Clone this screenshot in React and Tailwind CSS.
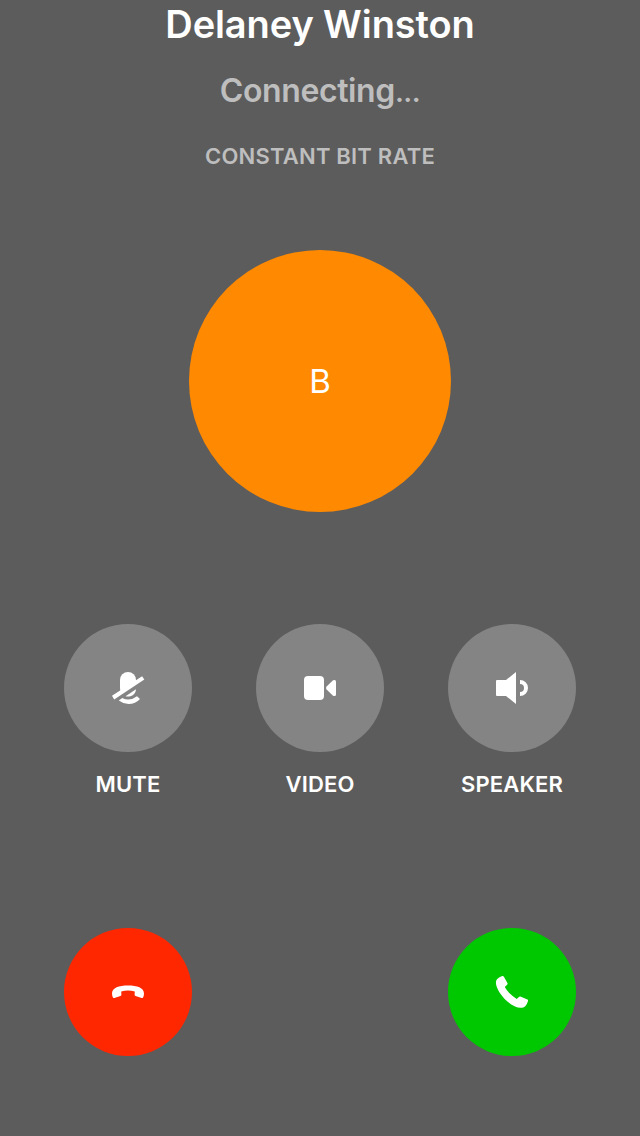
const MuteIcon = () => (
  <svg className="size-12" viewBox="0 0 48 48" fill="#fff">
    <path d="M16 16a8 8 0 0 1 16 0v2L17 28.500Q16 26.500 16 24z" />
    <path d="M21.600 32.200 32 25.200A8 7.500 0 0 1 21.600 32.200z" />
    <path d="M8 31.800 38.100 12.200 40.300 15.600 10.200 35.600z" />
    <path d="M18.300 33.900Q25.500 37.900 33 32.200L36 34.900Q31.500 40 24.500 40 19.500 40 14.800 36.500z" />
  </svg>
);

const VideoIcon = () => (
  <svg className="size-12" viewBox="0 0 48 48" fill="#fff">
    <rect x="8" y="12" width="20" height="24" rx="4" />
    <path d="M30.600 22.600 36.800 16.400Q37.400 15.900 38 15.900H38.500Q40 15.900 40 17.500V30.500Q40 32.100 38.500 32.100H38Q37.400 32.100 36.800 31.600L30.600 25.400Q29.300 24 30.600 22.600z" />
  </svg>
);

const SpeakerIcon = () => (
  <svg className="size-12" viewBox="0 0 48 48" fill="#fff">
    <path d="M9 16h9L28 8v32l-10-8H9q-1 0-1-1V17q0-1 1-1z" />
    <path d="M32 16a8 8 0 0 1 0 16v-4a4 4 0 0 0 0-8z" />
  </svg>
);

const HangUpIcon = () => (
  <svg className="size-12" viewBox="0 0 48 48" fill="#fff">
    <path d="M8 25.500C8 19.600 15 17.400 24 17.400S40 19.600 40 25.500Q40 27.700 39 29.400 38.600 30.200 37.600 29.900L31.600 28Q30.600 27.700 30.600 26.600L30.800 23.500Q27.500 22.600 24 22.600T17.200 23.500L17.400 26.600Q17.400 27.700 16.400 28L10.400 29.900Q9.400 30.200 9 29.400 8 27.700 8 25.500z" />
  </svg>
);

const AnswerIcon = () => (
  <svg className="size-12" viewBox="0 0 48 48" fill="#fff">
    <path d="M11.500 9.300 14.200 8Q15.300 7.600 15.900 8.700L19.400 14.900Q19.900 15.900 19.100 16.700L16.800 19.100Q18.300 22 21.300 25.100T28.700 31L31.200 28.800Q32 28.200 33 28.700L39.400 31.600Q40.300 32 40 32.900 39.100 36.300 37.200 38.200C32.800 42.300 23.800 38.200 16.900 31.200S5.800 14.900 9 11.200Q10 10.100 11.500 9.300z" />
  </svg>
);

const controls = [
  { label: 'MUTE', Icon: MuteIcon },
  { label: 'VIDEO', Icon: VideoIcon },
  { label: 'SPEAKER', Icon: SpeakerIcon },
];

export default function App() {
  return (
    <main className="flex h-[1136px] w-[640px] flex-col overflow-hidden bg-[#5c5c5c] font-['Inter',sans-serif] text-white">
      <header className="flex flex-col items-center whitespace-nowrap">
        <h1 className="h-12 text-[38px] leading-[48px] font-semibold tracking-[-0.1px]">Delaney Winston</h1>
        <p className="mt-[23px] h-10 text-[32px] leading-10 font-semibold tracking-[-0.4px] text-[#bebebe]">
          Connecting<span className="text-[28px] tracking-[-0.5px]">...</span>
        </p>
        <p className="mt-[31px] h-7 text-[22px] leading-7 font-semibold tracking-[0.2px] text-[#bebebe]">CONSTANT BIT RATE</p>
      </header>

      <div className="mt-20 flex size-[262px] items-center justify-center self-center rounded-full bg-[#ff8900] pt-0.5 text-[33px]">
        B
      </div>

      <section className="mt-28 grid grid-cols-3 px-8">
        {controls.map(({ label, Icon }) => (
          <div key={label} className="flex flex-col items-center">
            <button aria-label={label} className="flex size-32 items-center justify-center rounded-full bg-[#848484]">
              <Icon />
            </button>
            <span className="mt-[18px] text-[22px] leading-7 font-semibold tracking-[0.15px]">{label}</span>
          </div>
        ))}
      </section>

      <footer className="mt-[130px] flex justify-between px-16">
        <button aria-label="Decline" className="flex size-32 items-center justify-center rounded-full bg-[#ff2700]">
          <HangUpIcon />
        </button>
        <button aria-label="Answer" className="flex size-32 items-center justify-center rounded-full bg-[#00c800]">
          <AnswerIcon />
        </button>
      </footer>
    </main>
  );
}
